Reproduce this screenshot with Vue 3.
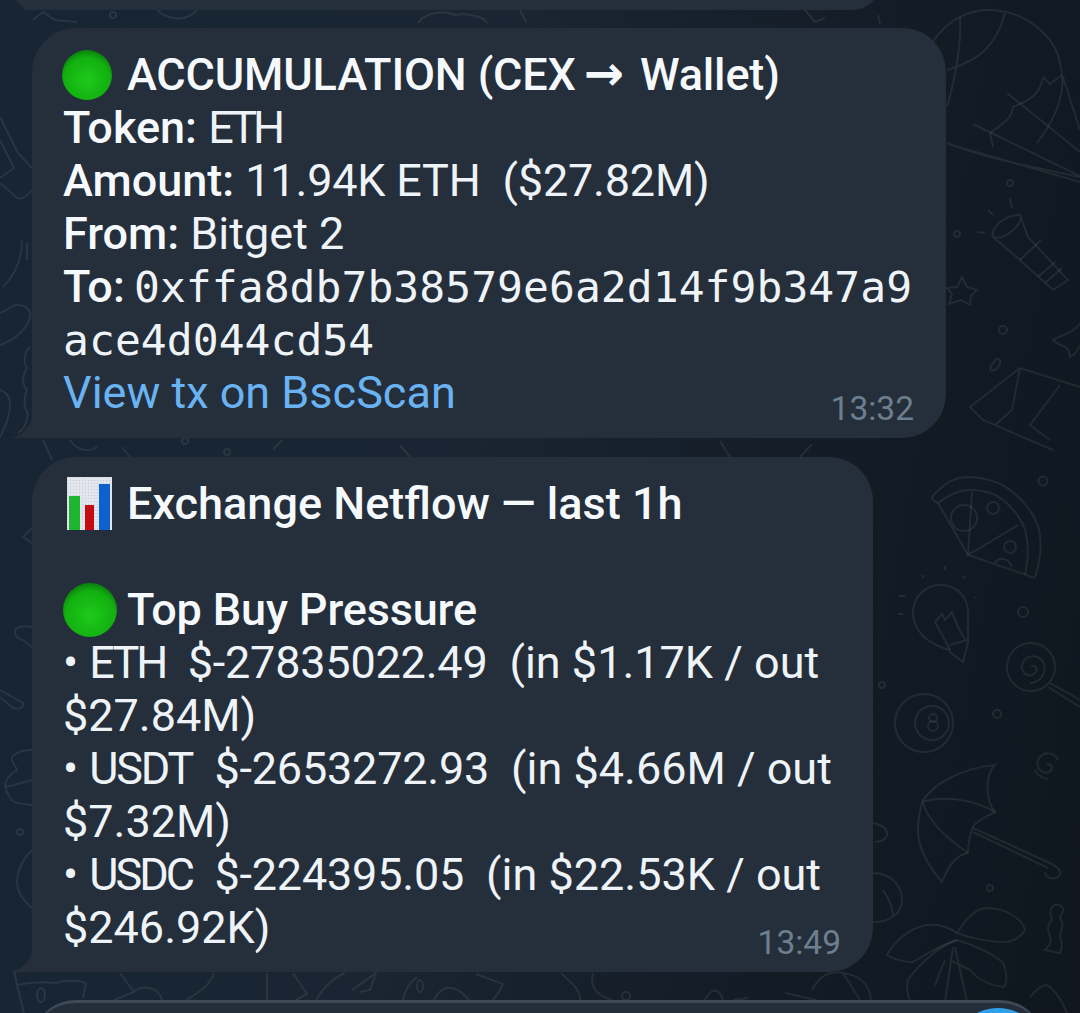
<template>
  <div class="chat">
    <svg class="doodles" width="1080" height="1013" viewBox="0 0 1080 1013" fill="none">
      <!-- balloon -->
      <path d="M932 43C950 15 975 9 992 10C1030 12 1056 40 1060 63C1066 85 1062 110 1037 143" />
      <path d="M960 17C962 40 955 80 947 107M1005 13C1000 30 995 40 985 50C975 60 960 66 947 70" />
      <path d="M1043 77L1050 84L1062 75M1043 77C1040 95 1030 100 1013 107C1012 120 1000 125 990 133L993 147M947 143C990 160 1040 168 1080 177M955 146L1080 182" />
      <path d="M1063 77L1080 130M1007 93L1080 152M973 124L1080 176" />
      <!-- flashlight -->
      <path d="M993 237C990 226 1008 214 1020 215C1024 222 1008 240 993 237ZM993 237L1020 260L1053 290L1068 280L1028 237L1020 215" />
      <path d="M1020 260L1041 240M1038 277L1055 262M1045 283L1062 268M1010 198L1012 208M988 210L993 215M977 232L985 233" />
      <circle cx="1010" cy="183" r="3" /><circle cx="957" cy="234" r="3" /><circle cx="1003" cy="330" r="4" />
      <!-- star -->
      <path d="M962 277L967 287L977 290L971 296L970 305L961 300L949 304L952 294L947 288L957 287Z" />
      <!-- fish -->
      <path d="M1080 323C1072 335 1060 335 1053 340C1058 347 1068 342 1070 357C1075 355 1078 350 1080 345" />
      <!-- map -->
      <path d="M1020 368L970 407L983 420L1053 450M1020 368L1080 387M1020 368L1012 410L995 425M1060 385L1045 405L1030 425L1050 440" />
      <path d="M993 363C998 355 1002 360 999 366C995 373 985 372 993 363Z" />
      <!-- strip above the first bubble -->
      <path d="M33 20L43 12L55 20L77 22M157 10C165 18 185 24 197 10M418 23C425 12 445 10 455 15C470 12 485 18 487 23M520 10L526 22M805 10L815 22L825 18M878 15L880 24" />
      <circle cx="113" cy="15" r="3" />
      <!-- strip between bubbles -->
      <path d="M43 440L52 460M70 440C78 452 90 452 97 447M122 447L130 457M273 450L282 440M400 445L410 457M720 441L730 457M800 457L812 444" />
      <circle cx="185" cy="441" r="3" /><circle cx="227" cy="452" r="3" />
      <!-- left edge, upper -->
      <path d="M0 117L18 153L32 168M0 140L14 168L0 178M0 183L17 198C22 200 28 195 32 190M22 240C22 258 15 275 3 287M27 243L27 260" />
      <path d="M0 313C8 310 12 305 17 305C25 305 32 310 30 317C28 328 15 340 0 345M0 390C7 392 10 398 10 403C10 415 5 428 0 437" />
      <path d="M30 347C24 352 23 362 27 368C22 376 22 384 27 390C23 398 24 408 28 414C26 422 26 428 18 433" />
      <!-- left edge, lower -->
      <path d="M32 528L23 537L32 543M32 627C22 625 15 627 15 632C15 638 22 640 23 640L32 647" />
      <path d="M0 690L23 703C24 708 18 710 13 708L0 697" />
      <path d="M32 750C20 750 10 755 12 760C14 766 17 768 17 770C8 775 5 780 5 787C8 796 12 802 17 803L32 805M5 787C15 785 25 782 32 780" />
      <circle cx="20" cy="832" r="3" />
      <path d="M32 850C22 860 17 872 17 883C17 893 25 902 32 908" />
      <!-- pizza -->
      <path d="M932 497C945 482 955 477 970 477C985 478 1000 482 1010 490C1030 505 1040 525 1040 537C1042 552 1038 568 1035 577C1032 578 1029 577 1027 575L968 555L938 503C935 502 932 500 932 497Z" />
      <path d="M938 503C948 495 960 490 970 490C985 490 996 494 1003 500C1018 512 1026 527 1027 540C1029 552 1027 565 1025 575M972 492L968 555L1018 525" />
      <circle cx="964" cy="518" r="13" /><circle cx="993" cy="508" r="6" /><circle cx="1010" cy="547" r="6" />
      <path d="M995 563C998 557 1008 557 1012 567" />
      <!-- bulb -->
      <path d="M950 650C930 645 913 632 913 613C913 597 925 585 940 585C957 585 968 597 968 613C968 625 968 635 968 643L963 662L950 652L950 650Z" />
      <path d="M935 622L942 614L945 620L952 612L957 625L965 640M935 622L945 640L950 650M950 645L967 640" />
      <path d="M945 566L945 570M922 575L924 578M965 576L963 579M899 596L905 596M898 614L903 614M975 597L975 598" />
      <circle cx="1043" cy="481" r="4.5" /><circle cx="1023" cy="612" r="5" /><circle cx="882" cy="685" r="3" /><circle cx="997" cy="714" r="4" />
      <!-- lollipop -->
      <circle cx="1031" cy="667" r="24" />
      <path d="M1031 667C1036 663 1039 670 1034 674C1027 678 1021 672 1022 665C1024 655 1038 653 1043 662C1048 672 1040 683 1030 683" />
      <path d="M1050 683L1080 700M1048 687L1080 707" />
      <!-- eight ball -->
      <circle cx="924" cy="723" r="29" /><circle cx="932" cy="723" r="17" />
      <circle cx="933" cy="718" r="4" /><circle cx="933" cy="726" r="5" />
      <!-- umbrella -->
      <path d="M922 802C932 785 960 768 995 765C985 775 985 800 995 812C982 818 973 825 973 827C970 835 968 845 968 853C958 855 950 862 942 882C930 868 918 850 918 830C918 820 920 810 922 802Z" />
      <path d="M922 802C945 795 975 800 995 812M923 803C930 825 950 840 968 853" />
      <path d="M973 828L1050 863C1060 868 1063 873 1058 877C1052 880 1046 878 1045 872M973 832L1048 868" />
      <circle cx="990" cy="888" r="3" />
      <path d="M1047 765C1050 762 1055 768 1049 772C1040 775 1035 765 1039 758C1045 750 1055 753 1058 760M1035 770C1037 775 1042 778 1048 779" />
      <path d="M873 823C882 825 887 828 887 833C887 840 880 842 875 842M873 873C890 873 902 885 902 900C902 915 888 922 873 922M883 890C890 900 893 910 893 917" />
      <!-- candy -->
      <path d="M1052 907C1056 903 1064 905 1063 911C1062 915 1058 916 1062 922C1064 928 1060 932 1060 936C1062 941 1063 946 1060 953L1045 950C1050 945 1052 942 1050 936C1047 930 1047 925 1052 920C1050 915 1050 910 1052 907Z" />
      <!-- palm -->
      <path d="M957 933C945 925 935 924 927 925C910 928 895 940 887 955C895 960 905 962 913 962C925 955 940 945 957 940" />
      <path d="M957 933C965 920 975 908 987 908C1005 908 1022 918 1025 930C1020 938 1012 942 1003 942C990 942 970 938 957 933Z" />
      <path d="M957 940C975 945 995 955 1003 963C1008 975 1007 985 1003 987C990 985 978 980 970 970M957 940C940 945 918 965 908 980C906 988 907 994 910 1000" />
      <path d="M953 947L945 1002M955 947L967 1002M935 985L945 960M950 960L970 970" />
      <path d="M1030 997C1036 990 1042 985 1047 985C1055 990 1063 1002 1067 1013" />
      <!-- strip under the second bubble -->
      <path d="M14 970L17 985C30 982 45 982 55 983C65 980 78 980 86 983L83 998M17 985L24 1013" />
      <ellipse cx="41" cy="995" rx="4" ry="7" />
      <path d="M120 973L134 992L114 1000M134 992C140 985 158 985 162 1000M214 973C210 985 200 992 186 1000M267 973L267 1000M293 973L307 994L296 1000M345 973C330 980 320 992 315 1003M352 990L376 973L370 990L360 992" />
      <path d="M417 977C410 982 405 990 403 1000M434 1000C440 988 452 980 469 1000M476 974L503 984C500 992 495 997 493 1000" />
      <ellipse cx="420" cy="986" rx="3" ry="6" />
      <path d="M561 973C570 982 580 988 580 1000M593 973C590 985 595 995 612 1000M705 1000C710 990 718 985 723 1000M733 1000L748 998M785 993L816 1000M812 990C820 975 830 970 843 973C860 975 870 985 871 1000M843 973L860 1000" />
      <circle cx="626" cy="996" r="4" />
    </svg>

    <div class="bubble prev">
      <svg class="tail" width="18" height="10" viewBox="0 0 18 10"><path d="M18 0V10H7C11 7 0 3 0 0Z" /></svg>
    </div>

    <div class="bubble first">
      <div class="line head"><svg class="ball" viewBox="0 0 52 52"><use href="#ball" /></svg><b class="tight">ACCUMULATION (CEX<span class="arrow">→</span>Wallet)</b></div>
      <div class="line"><b>Token:</b> <span class="sym token">ETH</span></div>
      <div class="line"><b>Amount:</b> <span class="amt">11.94K ETH&nbsp; ($27.82M)</span></div>
      <div class="line"><b>From:</b> Bitget 2</div>
      <div class="line"><b>To:</b> <code class="addr">0xffa8db7b38579e6a2d14f9b347a9</code></div>
      <div class="line"><code>ace4d044cd54</code></div>
      <div class="line link">View tx on BscScan</div>
      <span class="time">13:32</span>
      <svg class="tail" width="22" height="22" viewBox="0 0 22 22"><path d="M22 0V22H0C10 20 17 14 22 0Z" /></svg>
    </div>

    <div class="bubble second">
      <div class="line head">
        <svg class="chart" viewBox="0 0 45 53">
          <defs>
            <pattern id="dots" width="3" height="3" patternUnits="userSpaceOnUse">
              <rect width="3" height="3" fill="#e2e5ec" />
              <rect width="1" height="1" fill="#c5cad6" />
            </pattern>
          </defs>
          <rect width="45" height="53" fill="url(#dots)" />
          <rect x="2" y="19" width="11" height="34" fill="#1db52f" />
          <rect x="18" y="28" width="9" height="25" fill="#c40d12" />
          <rect x="32" y="7" width="11" height="46" fill="#0e62cf" />
        </svg><b>Exchange Netflow — last 1h</b>
      </div>
      <div class="line"></div>
      <div class="line head"><svg class="ball big" viewBox="0 0 52 52"><use href="#ball" /></svg><b class="tight">Top Buy Pressure</b></div>
      <div class="line">• <span class="sym">ETH</span>&nbsp; <span class="amt">$-27835022.49&nbsp; </span>(in $1.17K / out</div>
      <div class="line">$27.84M)</div>
      <div class="line">• <span class="sym wide">USDT</span>&nbsp; <span class="amt">$-2653272.93&nbsp; </span>(in $4.66M / out</div>
      <div class="line">$7.32M)</div>
      <div class="line">• <span class="sym">USDC</span>&nbsp; <span class="amt">$-224395.05&nbsp; </span>(in $22.53K / out</div>
      <div class="line">$246.92K)</div>
      <span class="time">13:49</span>
      <svg class="tail" width="22" height="22" viewBox="0 0 22 22"><path d="M22 0V22H0C10 20 17 14 22 0Z" /></svg>
    </div>

    <div class="composer"><span class="send"></span></div>

    <svg width="0" height="0" class="defs">
      <defs>
        <radialGradient id="ballFill" cx="50%" cy="60%" r="58%">
          <stop offset="0" stop-color="#1fc91a" />
          <stop offset="0.78" stop-color="#12b010" />
          <stop offset="1" stop-color="#0a860c" />
        </radialGradient>
        <g id="ball"><circle cx="26" cy="26" r="26" fill="url(#ballFill)" /></g>
      </defs>
    </svg>
  </div>
</template>

<script setup>
</script>

<style>
html, body { margin: 0; background: #10161f; }
</style>

<style scoped>
.chat {
  position: relative;
  width: 1080px;
  height: 1013px;
  overflow: hidden;
  background: linear-gradient(100deg, #172534 0%, #192532 42%, #131b25 75%, #0f161e 100%);
  font-family: Roboto, "Liberation Sans", sans-serif;
  font-size: 45px;
  color: #eef3f8;
  display: flex;
  flex-direction: column;
  align-items: flex-start;
}
.doodles {
  position: absolute;
  top: 0;
  left: 0;
  stroke: rgba(255, 255, 255, 0.075);
  stroke-width: 2;
}
.defs { position: absolute; }
.bubble {
  position: relative;
  flex-shrink: 0;
  background: #242f3b;
  border-radius: 44px 44px 44px 0;
  margin-left: 32px;
  box-sizing: border-box;
  padding: 20px 31px 18px;
}
.prev {
  width: 848px;
  height: 54px;
  margin-top: -44px;
  margin-bottom: 18px;
  padding: 0;
}
.prev .tail {
  left: -16px;
}
.first { width: 914px; height: 410px; }
.second { width: 841px; height: 515px; margin-top: 19px; }
.line {
  height: 53px;
  line-height: 53px;
  white-space: nowrap;
}
.head { display: flex; align-items: center; }
b { font-weight: 500; color: #f6f9fc; }
.tight { letter-spacing: -0.15px; }
.sym { letter-spacing: -3px; }
.sym.wide { letter-spacing: -2.25px; }
.sym.token { letter-spacing: -4px; }
.amt { letter-spacing: -0.2px; }
code {
  font-family: "DejaVu Sans Mono", monospace;
  font-size: 43px;
  letter-spacing: 0.05px;
}
.addr { margin-left: -2px; }
.arrow {
  font-family: "DejaVu Sans", sans-serif;
  font-weight: 700;
  font-size: 48px;
  line-height: 0;
  margin: 0 16px 0 8px;
}
.link { color: #6ab3f3; }
.ball {
  width: 50px;
  height: 50px;
  margin: 0 15px 0 -1px;
  flex-shrink: 0;
}
.ball.big {
  width: 54px;
  height: 54px;
  margin: 0 10px 0 0;
}
.chart {
  width: 45px;
  height: 53px;
  margin: 0 15px 0 4px;
  flex-shrink: 0;
}
.time {
  position: absolute;
  right: 32px;
  bottom: 11px;
  font-size: 33.5px;
  line-height: 36px;
  color: #6d7f8f;
}
.tail {
  position: absolute;
  left: -21px;
  bottom: 0;
  fill: #242f3b;
}
.composer {
  position: absolute;
  left: 32px;
  top: 1000px;
  width: 1012px;
  height: 60px;
  background: #232e3a;
  border-top: 3px solid #3d4956;
  border-radius: 44px 44px 0 0;
}
.send {
  position: absolute;
  left: 918px;
  top: 5px;
  width: 96px;
  height: 96px;
  border-radius: 50%;
  background: #2f9fe8;
}
</style>
